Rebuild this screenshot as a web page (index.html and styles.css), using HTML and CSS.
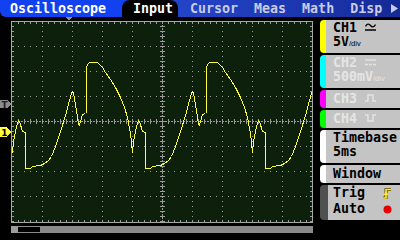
FILE: index.html
```html
<!DOCTYPE html>
<html lang="en">
<head>
  <meta charset="UTF-8" />
  <title>Oscilloscope</title>
  <link rel="stylesheet" href="styles.css">
</head>
<body>
  <div class="topbar">
    <div class="tab home">Oscilloscope</div>
    <div class="tab active">Input</div>
    <div class="tab first">Cursor</div>
    <div class="tab">Meas</div>
    <div class="tab">Math</div>
    <div class="tab">Disp</div>
    <svg class="more" width="7" height="9" viewBox="0 0 7 9"><polygon points="0,0 7,4.5 0,9" fill="#c8cce8"/></svg>
  </div>

  <div class="main">
    <div class="scope-col">
      <svg class="screen" width="320" height="207" viewBox="0 17 320 207" shape-rendering="crispEdges">
        <defs>
          <clipPath id="clip"><rect x="12" y="22" width="300" height="200"/></clipPath>
        </defs>
        <rect x="11.5" y="21.5" width="301" height="201" fill="#0c200c" stroke="#a8a8a8"/>
        <!-- grid -->
        <g fill="none" stroke="#9c9c9c">
          <path stroke-dasharray="1 4" d="M42.5 26V221M72.5 26V221M102.5 26V221M132.5 26V221M192.5 26V221M222.5 26V221M252.5 26V221M282.5 26V221"/>
          <path stroke-dasharray="1 5" d="M18 46.5H312M18 71.5H312M18 96.5H312M18 146.5H312M18 171.5H312M18 196.5H312"/>
          <path stroke-dasharray="2 1" d="M12 121.5H312M162.5 22V222"/>
          <path stroke-width="5" stroke-dasharray="1 5" d="M18 121.5H312"/>
          <path stroke-width="5" stroke-dasharray="1 4" d="M162.5 26V222"/>
          <path stroke-width="2" stroke-dasharray="1 5" d="M18 23H312M18 221H312"/>
          <path stroke-width="2" stroke-dasharray="1 4" d="M13 26V222M311 26V222"/>
        </g>
        <!-- CH1 trace -->
        <g clip-path="url(#clip)">
          <g fill="none" stroke="#ffff3c" transform="translate(0.5 0.5)">
            <polyline id="wave" points="11,152 12,152 13,141 16,126 18,120 19,121 22,131 25,132 25,168 30,168 32,166 40,165 44,163 48,160 51,156 55,146 60,131 65,115 69,100 71,93 72,91 73,92 75,104 77,117 78,124 79,125 80,121 82,114 85,113 86,112 86,67 87,64 89,62 97,62 99,64 102,67 105,72 110,79 115,87 120,97 124,107 127,117 130,133 132,152"/>
            <use href="#wave" x="120"/>
            <use href="#wave" x="240"/>
          </g>
        </g>
        <!-- markers -->
        <polygon points="65,17 72,17 68.5,20.5" fill="#8c8c8c"/>
        <polygon points="0,100 7,100 11,104 7,108 0,108" fill="#8c8c8c"/>
        <text class="mark" x="4.5" y="107.5" fill="#222">T</text>
        <polygon points="0,127 7,127 11,132 7,137 0,137" fill="#ffff3c"/>
        <text class="mark" x="4.5" y="136" fill="#000">1</text>
      </svg>
      <div class="scroll"><div class="thumb"></div></div>
    </div>

    <div class="panel">
      <div class="key">
        <span class="tag ch1"></span>
        <div class="face">
          <div>CH1<svg class="sym" width="11" height="8" viewBox="0 0 11 8"><path d="M0.5 3.5C2 0.5 4 0.5 5.5 2.5S9 4.5 10.5 1.5M0 7H11" fill="none" stroke="#000" stroke-width="1.4"/></svg></div>
          <div>5V<small>/div</small></div>
        </div>
      </div>
      <div class="key off">
        <span class="tag ch2"></span>
        <div class="face">
          <div>CH2<svg class="sym" width="11" height="8" viewBox="0 0 11 8"><path d="M0 2H11" stroke="currentColor" stroke-width="1.4"/><path d="M0 6.5H11" stroke="currentColor" stroke-width="1.4" stroke-dasharray="3 1"/></svg></div>
          <div>500mV<small>/div</small></div>
        </div>
      </div>
      <div class="key short off">
        <span class="tag ch3"></span>
        <div class="face">CH3<svg class="sym" width="11" height="8" viewBox="0 0 11 8"><path d="M0 7H3V1H8V7H11" fill="none" stroke="currentColor" stroke-width="1.4"/></svg></div>
      </div>
      <div class="key short off">
        <span class="tag ch4"></span>
        <div class="face">CH4<svg class="sym" width="11" height="8" viewBox="0 0 11 8"><path d="M0 1H3V7H8V1H11" fill="none" stroke="currentColor" stroke-width="1.4"/></svg></div>
      </div>
      <div class="key">
        <span class="tag white"></span>
        <div class="face">
          <div>Timebase</div>
          <div>5ms</div>
        </div>
      </div>
      <div class="key short">
        <span class="tag white"></span>
        <div class="face">Window</div>
      </div>
      <div class="key trig">
        <span class="tag dark"></span>
        <div class="face">
          <div class="row">Trig<svg width="10" height="11" viewBox="0 0 10 11"><path d="M1 10H4V1.5H9" fill="none" stroke="#5a4a00" stroke-width="3"/><path d="M1 10H4V1.5H9" fill="none" stroke="#ffe83c" stroke-width="1.6"/><polygon points="1.5,7 4,3.5 6.5,7" fill="#ffe83c"/></svg></div>
          <div class="row">Auto<svg width="9" height="9" viewBox="0 0 9 9"><circle cx="4.5" cy="4.5" r="4" fill="#e80000"/></svg></div>
        </div>
      </div>
    </div>
  </div>
</body>
</html>
```

FILE: styles.css
```css
body {
  margin: 0;
  width: 400px;
  height: 240px;
  overflow: hidden;
  background-color: #000;
  font-family: "DejaVu Sans Mono", monospace;
  font-weight: bold;
  font-size: 13.3px;
}
.topbar {
  display: flex;
  align-items: center;
  height: 17px;
  border-radius: 0 0 0 6px;
  background: linear-gradient(to right, #1242f0 0, #1242f0 120px, #2444c8 180px, #1c36b0 300px, #142a94 100%);
}
.tab {
  line-height: 17px;
  color: #c8cce8;
  margin-left: 16px;
}
.tab.home {
  width: 112px;
  margin-left: 0;
  padding-left: 10px;
  color: #fff;
}
.tab.active {
  margin-left: 0;
  padding: 0 5px 0 11px;
  background-color: #000;
  border-radius: 8px 8px 0 0;
  color: #fff;
}
.tab.first {
  margin-left: 12px;
}
.more {
  margin-left: auto;
  margin-right: 2px;
}
.main {
  display: flex;
}
.scope-col {
  width: 320px;
}
.screen {
  display: block;
}
.mark {
  font-family: "DejaVu Sans", sans-serif;
  font-size: 9px;
  font-weight: bold;
  text-anchor: middle;
}
.scroll {
  display: flex;
  align-items: center;
  width: 302px;
  height: 7px;
  margin: 2px 0 0 11px;
  box-sizing: border-box;
  border-left: 7px solid #9c9c9c;
  background-color: #8a8a8a;
}
.thumb {
  width: 22px;
  height: 5px;
  background-color: #000;
}
.panel {
  width: 80px;
  padding-top: 3px;
}
.key {
  display: flex;
  height: 33px;
  margin-bottom: 2px;
}
.key.short {
  height: 18px;
}
.key.trig {
  height: 35px;
  margin-bottom: 0;
}
.tag {
  width: 6px;
  border-radius: 4px 0 0 4px;
}
.tag.ch1 { background-color: #ffff00; }
.tag.ch2 { background-color: #00ffff; }
.tag.ch3 { background-color: #ff00ff; }
.tag.ch4 { background-color: #00ff00; }
.tag.white { background-color: #fff; }
.tag.dark {
  width: 8px;
  background-color: #505050;
}
.face {
  flex: 1;
  padding: 1px 0 0 7px;
  line-height: 14px;
  background-color: #c4c4c4;
  color: #000;
}
.short .face {
  padding-top: 0;
  line-height: 18px;
}
.trig .face {
  padding: 0 8px 0 5px;
  line-height: 16px;
}
.off .face {
  color: #e4e4e4;
}
.sym {
  margin-left: 8px;
  vertical-align: 1px;
}
.row {
  display: flex;
  justify-content: space-between;
  align-items: center;
}
small {
  font-family: "Liberation Sans", sans-serif;
  font-weight: normal;
  font-size: 7.5px;
}
```
